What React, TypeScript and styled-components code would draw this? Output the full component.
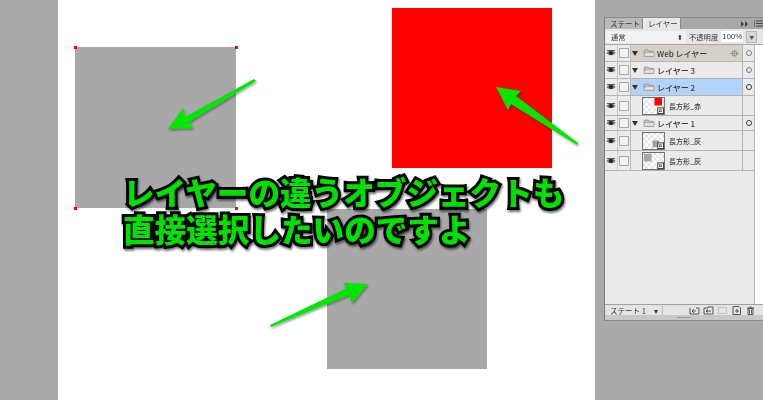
import React from "react";
import styled, { createGlobalStyle } from "styled-components";

const Global = createGlobalStyle`
  html, body { margin: 0; padding: 0; background: #aaaaaa; overflow: hidden; }
  #root { width: 763px; height: 400px; }
`;

const Stage = styled.div`
  position: relative;
  width: 763px;
  height: 400px;
  overflow: hidden;
  background: #aaaaaa;
  display: flex;
  font-family: "Noto Sans CJK JP", "Noto Sans", sans-serif;
`;

const Artboard = styled.div`
  position: relative;
  width: 537px;
  height: 400px;
  margin-left: 58px;
  background: #fff;
  flex: none;
`;

const Shape = styled.div<{ $x: number; $y: number; $w: number; $color: string }>`
  position: absolute;
  left: ${(p) => p.$x}px;
  top: ${(p) => p.$y}px;
  width: ${(p) => p.$w}px;
  height: ${(p) => p.$w}px;
  background: ${(p) => p.$color};
`;

const Handle = styled.div<{ $x: number; $y: number }>`
  position: absolute;
  left: ${(p) => p.$x}px;
  top: ${(p) => p.$y}px;
  width: 3px;
  height: 3px;
  background: #f00000;
`;

const ArrowLayer = styled.svg`
  position: absolute;
  left: 0;
  top: 0;
  width: 763px;
  height: 400px;
  pointer-events: none;
`;

const Caption = styled.div`
  position: absolute;
  left: 123px;
  top: 173px;
  width: 470px;
  font-size: 31.6px;
  line-height: 37px;
  font-weight: 900;
  color: #00e000;
  white-space: nowrap;
  -webkit-text-stroke: 6px #000;
  paint-order: stroke fill;
  filter: drop-shadow(1px 2px 1px rgba(0, 0, 0, 0.55));
`;

const Panel = styled.div`
  position: absolute;
  left: 604px;
  top: 17px;
  width: 159px;
  height: 304px;
  display: flex;
  flex-direction: column;
  background: #d0d0d0;
  border-left: 1px solid #7c7c7c;
  border-top: 1px solid #8a8a8a;
  border-bottom: 1px solid #8a8a8a;
  box-sizing: border-box;
  color: #3a3a3a;
  font-size: 8px;
  filter: blur(0.3px);
`;

const TabBar = styled.div`
  height: 11px;
  display: flex;
  align-items: flex-end;
  background: #a8a8a8;
  flex: none;
`;

const Tab = styled.div<{ $active?: boolean }>`
  height: 11px;
  padding: 0 5px;
  width: 38px;
  box-sizing: border-box;
  line-height: 11px;
  font-size: 7.5px;
  color: #333;
  background: ${(p) => (p.$active ? "#e8e8e8" : "#b9b9b9")};
  border-right: 1px solid #8c8c8c;
  white-space: nowrap;
`;

const TabTools = styled.div`
  margin-left: auto;
  display: flex;
  align-items: center;
  height: 11px;
  gap: 6px;
  margin-right: -1px;
  transform: translateX(-1px);
`;

const OptionBar = styled.div`
  height: 15px;
  display: flex;
  align-items: center;
  padding: 0 0 0 1px;
  gap: 3px;
  background: #e6e6e6;
  border-bottom: 1px solid #a8a8a8;
  flex: none;
  font-size: 7.3px;
`;

const BlendSelect = styled.div`
  width: 80px;
  height: 12px;
  line-height: 12px;
  padding: 0 3px 0 5px;
  box-sizing: border-box;
  background: #f3f3f3;
  border-radius: 2px;
  display: flex;
  justify-content: space-between;
`;

const Opacity = styled.div`
  height: 11px;
  width: 22px;
  line-height: 11px;
  background: #fff;
  text-align: center;
  font-family: "Liberation Sans", sans-serif;
  font-size: 8px;
`;

const Stepper = styled.div`
  width: 9px;
  height: 10px;
  background: #d8d8d8;
  border: 1px solid #b5b5b5;
  font-size: 5px;
  line-height: 10px;
  text-align: center;
  color: #555;
`;

const ListArea = styled.div`
  flex: 1;
  display: flex;
  background: #fff;
  min-height: 0;
`;

const LayerList = styled.div`
  width: 150px;
  background: #ebebeb;
  flex: none;
  border-right: 1px solid #b4b4b4;
  box-sizing: border-box;
`;

const Row = styled.div<{ $h: number; $bg?: string }>`
  height: ${(p) => p.$h}px;
  display: flex;
  align-items: stretch;
  box-sizing: border-box;
  border-bottom: 1px solid #b4b4b4;
  background: ${(p) => p.$bg || "#ebebeb"};
`;

const EyeCell = styled.div`
  width: 12px;
  background: #ebebeb;
  display: flex;
  align-items: center;
  justify-content: center;
  flex: none;
  border-right: 1px solid #c8c8c8;
`;

const CheckCell = styled.div`
  width: 12px;
  background: #ebebeb;
  display: flex;
  align-items: center;
  justify-content: center;
  flex: none;
  border-right: 1px solid #bbb;
`;

const CheckBox = styled.div`
  width: 8px;
  height: 8px;
  background: #f3f3f3;
  border: 1px solid #aaa;
`;

const Content = styled.div<{ $indent?: number }>`
  flex: 1;
  display: flex;
  align-items: center;
  padding-left: ${(p) => p.$indent || 1}px;
  min-width: 0;
  white-space: nowrap;
`;

const Tri = styled.div`
  width: 0;
  height: 0;
  border-left: 3px solid transparent;
  border-right: 3px solid transparent;
  border-top: 5px solid #333;
  margin-right: 5px;
  flex: none;
`;

const CircleCell = styled.div`
  width: 11px;
  display: flex;
  align-items: center;
  justify-content: center;
  border-left: 1px solid #b4b4b4;
  flex: none;
  background: #ebebeb;
`;

const Circle = styled.div<{ $strong?: boolean }>`
  width: 6px;
  height: 6px;
  border-radius: 50%;
  background: #f4f4f4;
  border: 1px solid ${(p) => (p.$strong ? "#333" : "#777")};
  box-sizing: border-box;
`;

const LayerName = styled.span`
  margin-left: 2px;
  font-weight: 500;
`;

const SmallName = styled.span`
  margin-left: 4px;
  font-size: 7px;
  font-weight: 500;
`;

const TargetIcon = styled.svg`
  margin-left: auto;
  margin-right: 3px;
`;

const Footer = styled.div`
  height: 10px;
  display: flex;
  align-items: center;
  background: #e4e4e4;
  border-top: 1px solid #a0a0a0;
  flex: none;
  font-size: 7.5px;
`;

const StateSelect = styled.div`
  width: 58px;
  padding: 0 4px 0 5px;
  box-sizing: border-box;
  display: flex;
  justify-content: space-between;
  border-right: 1px solid #bbb;
  height: 9px;
  line-height: 9px;
`;

const FooterTools = styled.div`
  margin-left: auto;
  display: flex;
  align-items: center;
  gap: 3px;
  padding-right: 7px;
`;

const Grip = styled.div`
  height: 5px;
  flex: none;
  background: #c8c8c8;
  display: flex;
  align-items: center;
  justify-content: center;
`;

const GripDots = styled.div`
  width: 14px;
  height: 1px;
  background: #999;
`;

const Eye = () => (
  <svg width="10" height="8" viewBox="0 0 10 8">
    <path d="M0.5 4 C2.5 1 7.5 1 9.5 4 C7.5 7 2.5 7 0.5 4Z" fill="#777" />
    <circle cx="5" cy="4" r="2" fill="#222" />
    <path d="M1 1.5 L9 1.5" stroke="#333" strokeWidth="0.8" />
  </svg>
);

const Folder = () => (
  <svg width="12" height="8" viewBox="0 0 14 9" style={{ flex: "none" }}>
    <path d="M2 8.5 L1 3 L2 1 L6 1 L7 2.5 L12 2.5 L12.5 8.5Z" fill="#c8c4bc" stroke="#777" strokeWidth="0.7" />
    <path d="M1 8.5 L2.5 4 L13.5 4 L12.5 8.5Z" fill="#e4e2dc" stroke="#888" strokeWidth="0.6" />
  </svg>
);

const Thumb = ({ fill, x, y, w, h }: { fill: string; x: number; y: number; w: number; h: number }) => (
  <svg width="23" height="18" viewBox="0 0 24 19" style={{ flex: "none" }}>
    <defs>
      <pattern id="chk" width="6" height="6" patternUnits="userSpaceOnUse">
        <rect width="6" height="6" fill="#fff" />
        <rect width="3" height="3" fill="#e4e4e4" />
        <rect x="3" y="3" width="3" height="3" fill="#e4e4e4" />
      </pattern>
    </defs>
    <rect x="0.5" y="0.5" width="23" height="18" fill="url(#chk)" stroke="#666" />
    <rect x={x} y={y} width={w} height={h} fill={fill} />
    <rect x="16.5" y="11.5" width="6" height="6" fill="#fff" stroke="#333" />
    <rect x="18.5" y="13.5" width="2" height="2" fill="#fff" stroke="#333" strokeWidth="0.7" />
  </svg>
);

const FootIcon = ({ children }: { children: React.ReactNode }) => (
  <svg width="11" height="9" viewBox="0 0 11 9" fill="none" stroke="#333" strokeWidth="0.8">
    {children}
  </svg>
);

type LayerProps = { name: string; bg?: string; strong?: boolean; target?: boolean; h: number };

const GroupRow = ({ name, bg, strong, target, h }: LayerProps) => (
  <Row $h={h} $bg={bg}>
    <EyeCell><Eye /></EyeCell>
    <CheckCell><CheckBox /></CheckCell>
    <Content>
      <Tri />
      <Folder />
      <LayerName>{name}</LayerName>
      {target && (
        <TargetIcon width="9" height="7" viewBox="0 0 9 7">
          <circle cx="4.5" cy="3.5" r="2.5" fill="none" stroke="#888" />
          <path d="M0 3.5H9M4.5 0V7" stroke="#888" strokeWidth="0.7" />
        </TargetIcon>
      )}
    </Content>
    <CircleCell><Circle $strong={strong} /></CircleCell>
  </Row>
);

const ShapeRow = ({ name, h, thumb }: { name: string; h: number; thumb: React.ReactNode }) => (
  <Row $h={h}>
    <EyeCell><Eye /></EyeCell>
    <CheckCell><CheckBox /></CheckCell>
    <Content $indent={11}>
      {thumb}
      <SmallName>{name}</SmallName>
    </Content>
    <CircleCell />
  </Row>
);

const Arrow = ({ points }: { points: string }) => (
  <polygon points={points} fill="#00e600" />
);

export default function App() {
  const arrows = [
    "168,129 183,108 185,117 254,79 256,81 189,122 193,128",
    "368,284 343,283 347,288 270,325 271,327 349,295 352,303",
    "496,87 521,91 516,96 578,143 577,145 511,104 508,110",
  ];
  return (
    <Stage>
      <Global />
      <Artboard>
        <Shape $x={17} $y={47} $w={161} $color="#a8a8a8" />
        <Shape $x={334} $y={8} $w={160} $color="#ff0000" />
        <Shape $x={269} $y={208.5} $w={160} $color="#a8a8a8" />
        <Handle $x={16} $y={46} />
        <Handle $x={177} $y={46} />
        <Handle $x={16} $y={207} />
        <Handle $x={177} $y={207} />
      </Artboard>
      <ArrowLayer viewBox="0 0 763 400">
        <defs>
          <filter id="sh" x="-20%" y="-20%" width="140%" height="140%">
            <feDropShadow dx="1" dy="1.5" stdDeviation="1" floodColor="#000" floodOpacity="0.4" />
          </filter>
        </defs>
        <g filter="url(#sh)">
          {arrows.map((p) => (
            <Arrow key={p} points={p} />
          ))}
        </g>
      </ArrowLayer>
      <Caption>
        レイヤーの違うオブジェクトも
        <br />
        直接選択したいのですよ
      </Caption>
      <Panel>
        <TabBar>
          <Tab>ステート</Tab>
          <Tab $active>レイヤー</Tab>
          <TabTools>
            <svg width="7" height="6" viewBox="0 0 7 6"><path d="M0 0L3 3L0 6ZM4 0L7 3L4 6Z" fill="#444" /></svg>
            <svg width="9" height="7" viewBox="0 0 9 7"><path d="M0 0V7M2 1H9M2 3.5H9M2 6H9" stroke="#444" /></svg>
          </TabTools>
        </TabBar>
        <OptionBar>
          <BlendSelect>
            <span>通常</span>
            <span>⬍</span>
          </BlendSelect>
          <span>不透明度</span>
          <Opacity>100%</Opacity>
          <Stepper>▼</Stepper>
        </OptionBar>
        <ListArea>
          <LayerList>
            <GroupRow name="Web レイヤー" bg="#d6d1c8" target h={17} />
            <GroupRow name="レイヤー 3" h={17} />
            <GroupRow name="レイヤー 2" bg="#b4d3fb" strong h={17} />
            <ShapeRow name="長方形_赤" h={20} thumb={<Thumb fill="#ff0000" x={13} y={1} w={8} h={8} />} />
            <GroupRow name="レイヤー 1" strong h={15} />
            <ShapeRow name="長方形_灰" h={20} thumb={<Thumb fill="#a0a0a0" x={11} y={9} w={7} h={7} />} />
            <ShapeRow name="長方形_灰" h={20} thumb={<Thumb fill="#a8a8a8" x={2} y={2} w={8} h={8} />} />
          </LayerList>
        </ListArea>
        <Footer>
          <StateSelect>
            <span>ステート 1</span>
            <span>▾</span>
          </StateSelect>
          <FooterTools>
            <FootIcon><path d="M1 2V8H10V2H7M7 5H3M5 3L3 5L5 7" /></FootIcon>
            <FootIcon><path d="M1 2H5V1H10V8H1ZM8 5H3M5 3.5L3 5L5 6.5" /></FootIcon>
            <FootIcon><path d="M1.5 1.5H9.5V7.5H1.5Z" stroke="#bbb" /></FootIcon>
            <FootIcon><path d="M2 0.5H8L9.5 2V8.5H2ZM4 5H8M6 3V7" /></FootIcon>
            <FootIcon><path d="M3 2.5H8V8.5H3ZM2 2H9M4.5 1H6.5M4.5 3.5V7.5M6.5 3.5V7.5" /></FootIcon>
          </FooterTools>
        </Footer>
        <Grip><GripDots /></Grip>
      </Panel>
    </Stage>
  );
}
